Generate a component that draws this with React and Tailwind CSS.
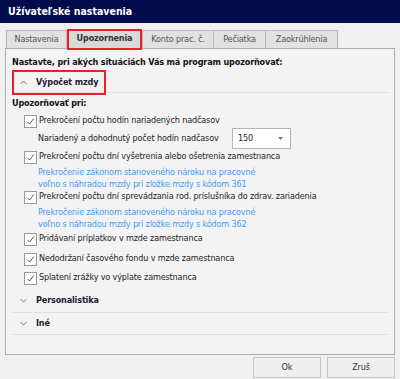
import React from 'react';

const Check = () => (
  <span className="w-[13px] h-[13px] shrink-0 border border-[#9a9a9a] bg-white flex items-center justify-center">
    <svg width="9" height="9" viewBox="0 0 9 9">
      <path d="M1.5 4.8 L3.5 7 L7.8 1.5" fill="none" stroke="#555" strokeWidth="1" />
    </svg>
  </span>
);

const Row = ({ label, note, className = '' }) => (
  <div className={`flex flex-col ${className}`}>
    <div className="flex items-center gap-[2px] h-[14px]">
      <Check />
      <span>{label}</span>
    </div>
    {note && (
      <div className="pl-[14px] text-[#3d9bf5] leading-[12px] mt-[2px]">
        {note.map((l) => <div key={l}>{l}</div>)}
      </div>
    )}
  </div>
);

const Caret = ({ up }) => (
  <svg width="7" height="5" viewBox="0 0 7 5" className="shrink-0">
    {up ? (
      <path d="M0.5 4 L3.5 1 L6.5 4" fill="none" stroke="#777" strokeWidth="1" />
    ) : (
      <path d="M0.5 1 L3.5 4 L6.5 1" fill="none" stroke="#777" strokeWidth="1" />
    )}
  </svg>
);

export default function App() {
  const tabs = [
    { t: 'Nastavenia', w: 'w-[61px]' },
    { t: 'Upozornenia', w: 'w-[73px] ml-[1px]', active: true },
    { t: 'Konto prac. č.', w: 'w-[72px] ml-[1px]' },
    { t: 'Pečiatka', w: 'w-[53px] -ml-px' },
    { t: 'Zaokrúhlenia', w: 'w-[73px] -ml-px' },
  ];
  return (
    <div
      className="w-[400px] h-[379px] bg-[#f0f0f0] flex flex-col overflow-hidden text-[9px] tracking-[-0.15px] text-[#1e1e1e] whitespace-nowrap"
      style={{ fontFamily: '"DejaVu Sans Condensed", "DejaVu Sans", sans-serif' }}
    >
      {/* Title bar */}
      <div className="h-[23px] bg-[#010a4a] text-white font-bold text-[10.5px] tracking-normal flex items-center pl-[8px] shrink-0">
        Užívateľské nastavenia
      </div>

      {/* Tabs */}
      <div className="flex items-end pl-[6px] pt-[6px] h-[25px] shrink-0 relative z-10">
        {tabs.map(({ t, w, active }) =>
          active ? (
            <div key={t} className={`relative h-[19px] ${w} bg-[#d9d9d9] border border-b-0 border-[#b0b0b0] flex items-center justify-center font-bold text-[#333]`}>
              {t}
              <div className="absolute -left-[2px] -right-[2px] -top-px -bottom-[2px] border-2 border-[#e8212a]" />
            </div>
          ) : (
            <div key={t} className={`h-[18px] ${w} bg-[#e1e1e1] border border-b-0 border-[#b9b9b9] flex items-center justify-center text-[#555]`}>
              {t}
            </div>
          )
        )}
      </div>

      {/* Panel */}
      <div className="mx-[5px] h-[307px] border border-[#adadad] bg-[#f3f3f3] shrink-0 flex flex-col px-[6px] pt-[7px]">
        <div className="font-bold text-[#111] h-[13px] flex items-center">Nastavte, pri akých situáciách Vás má program upozorňovať:</div>

        <div className="relative h-[24px] border-b border-[#e0e0e0]">
          <div className="absolute left-0 top-[1px] w-[94px] h-[25px] border-2 border-[#e8212a] flex items-center gap-[9px] pl-[6px] font-bold text-[#1b1b35]">
            <Caret up />
            <span>Výpočet mzdy</span>
          </div>
        </div>

        <div className="font-bold mt-[4px] h-[14px] flex items-center text-[#111]">Upozorňovať pri:</div>

        <div className="pl-[12px] mt-[3px] flex flex-col">
          <Row label="Prekročení počtu hodín nariadených nadčasov" />
          <div className="flex items-center h-[21px] pl-[14px]">
            <span className="w-[194px]">Nariadený a dohodnutý počet hodín nadčasov</span>
            <div className="w-[59px] h-[21px] bg-white border border-[#b4b4b4] flex items-center justify-between pl-[5px] pr-[7px]">
              <span>150</span>
              <svg width="5" height="3" viewBox="0 0 5 3"><path d="M0 0 L5 0 L2.5 3 Z" fill="#777" /></svg>
            </div>
          </div>
          <Row
            className="mt-[1px]"
            label="Prekročení počtu dní vyšetrenia alebo ošetrenia zamestnanca"
            note={['Prekročenie zákonom stanoveného nároku na pracovné', 'voľno s náhradou mzdy pri zložke mzdy s kódom 361']}
          />
          <Row
            label="Prekročení počtu dní sprevádzania rod. príslušníka do zdrav. zariadenia"
            note={['Prekročenie zákonom stanoveného nároku na pracovné', 'voľno s náhradou mzdy pri zložke mzdy s kódom 362']}
          />
          <Row className="mt-[2px]" label="Pridávaní príplatkov v mzde zamestnanca" />
          <Row className="mt-[6px]" label="Nedodržaní časového fondu v mzde zamestnanca" />
          <Row className="mt-[5px]" label="Splatení zrážky vo výplate zamestnanca" />
        </div>

        <div className="mt-[4px] h-[24px] border-b border-[#e0e0e0] flex items-center gap-[9px] pl-[8px] font-bold text-[#1b1b35]">
          <Caret />
          <span>Personalistika</span>
        </div>
        <div className="h-[22px] border-b border-[#e0e0e0] flex items-center gap-[9px] pl-[8px] font-bold text-[#1b1b35]">
          <Caret />
          <span>Iné</span>
        </div>
      </div>

      {/* Buttons */}
      <div className="flex justify-end gap-[6px] pr-[5px] mt-[2px]">
        <div className="w-[68px] h-[21px] border border-[#c4c4c4] bg-[#efefef] flex items-center justify-center text-[#333]">Ok</div>
        <div className="w-[68px] h-[21px] border border-[#c4c4c4] bg-[#efefef] flex items-center justify-center text-[#333]">Zruš</div>
      </div>
    </div>
  );
}
